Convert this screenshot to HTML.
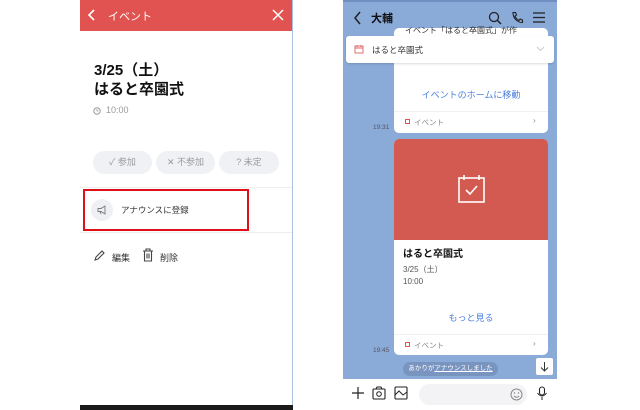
<!DOCTYPE html>
<html><head><meta charset="utf-8"><style>
*{margin:0;padding:0;box-sizing:border-box}
body{width:640px;height:410px;background:#fff;position:relative;overflow:hidden;font-family:"Liberation Sans","Noto Sans CJK JP",sans-serif;color:#111}
.a{position:absolute}
.btn{position:absolute;top:151px;height:23px;border-radius:12px;background:#f0f1f4;color:#999;font-size:9px;text-align:center;line-height:23px}
</style></head><body>
<!-- left phone -->
<div class="a" style="left:80px;top:0;width:213px;height:410px;background:#fff;border-right:1px solid #aac0e0"></div>
<div class="a" style="left:80px;top:0;width:212px;height:31px;background:#e05350"></div>
<svg class="a" style="left:86px;top:8px" width="12" height="14"><path d="M8 2L3 7L8 12" stroke="#fff" stroke-width="1.6" fill="none"/></svg>
<div class="a" style="left:108px;top:8px;font-size:11px;color:#fff">イベント</div>
<svg class="a" style="left:272px;top:9px" width="12" height="12"><path d="M1 1L11 11M11 1L1 11" stroke="#fff" stroke-width="1.5"/></svg>
<div class="a" style="left:94px;top:61px;font-size:15px;font-weight:bold;line-height:19px">3/25（土）<br>はると卒園式</div>
<svg class="a" style="left:93px;top:107px" width="8" height="8"><circle cx="4" cy="4" r="3.2" stroke="#999" fill="none" stroke-width="1"/><path d="M4 2V4H5.5" stroke="#999" fill="none" stroke-width=".8"/></svg>
<div class="a" style="left:106px;top:105px;font-size:9px;color:#999">10:00</div>
<div class="btn" style="left:93px;width:59px">✓ 参加</div>
<div class="btn" style="left:156px;width:59px">✕ 不参加</div>
<div class="btn" style="left:219px;width:60px">? 未定</div>
<div class="a" style="left:80px;top:187px;width:212px;height:1px;background:#eee"></div>
<div class="a" style="left:80px;top:232px;width:212px;height:1px;background:#eee"></div>
<div class="a" style="left:83px;top:189px;width:166px;height:42px;border:2px solid #e0101a"></div>
<div class="a" style="left:91px;top:199px;width:22px;height:22px;border-radius:11px;background:#eef0f3"></div>
<svg class="a" style="left:97px;top:205px" width="10" height="10"><path d="M1 3.5H4L8 1V9L4 6.5H1Z M3 6.5L4 9" stroke="#777" fill="none" stroke-width=".9"/></svg>
<div class="a" style="left:121px;top:204px;font-size:8.5px;color:#333">アナウンスに登録</div>
<svg class="a" style="left:93px;top:249px" width="13" height="13"><path d="M2 11L3 8L9 2L11 4L5 10Z" stroke="#444" fill="none" stroke-width="1.1"/></svg>
<div class="a" style="left:112px;top:251px;font-size:9px;color:#333">編集</div>
<svg class="a" style="left:142px;top:248px" width="12" height="14"><path d="M1 3H11M4 3V1H8V3M2.5 3V13H9.5V3M5 5.5V10.5M7 5.5V10.5" stroke="#444" fill="none" stroke-width="1.1"/></svg>
<div class="a" style="left:160px;top:251px;font-size:9px;color:#333">削除</div>
<div class="a" style="left:80px;top:405px;width:213px;height:5px;background:#1a1a1a"></div>
<!-- right phone -->
<div class="a" style="left:343px;top:0;width:214px;height:410px;background:#8aaad8"></div>
<div class="a" style="left:343px;top:0;width:214px;height:2px;background:#6f8fc0"></div>
<svg class="a" style="left:353px;top:11px" width="10" height="14"><path d="M7 1L2 7L7 13" stroke="#222" stroke-width="1.5" fill="none"/></svg>
<div class="a" style="left:371px;top:10px;font-size:11px;font-weight:bold">大輔</div>
<svg class="a" style="left:488px;top:11px" width="14" height="14"><circle cx="6" cy="6" r="4.5" stroke="#222" fill="none" stroke-width="1.3"/><path d="M9.5 9.5L13 13" stroke="#222" stroke-width="1.5"/></svg>
<svg class="a" style="left:511px;top:11px" width="13" height="13"><path d="M2 1.5L4.5 1.5L5.5 4L4 5.2C5 7.5 6 8.5 8 9.5L9.2 8L11.5 9V11.5C6 11.5 2 7 2 1.5Z" stroke="#222" fill="none" stroke-width="1.1"/></svg>
<svg class="a" style="left:533px;top:12px" width="12" height="11"><path d="M0 1H12M0 5.5H12M0 10H12" stroke="#222" stroke-width="1.3"/></svg>
<!-- card1 -->
<div class="a" style="left:394px;top:28px;width:154px;height:105px;background:#fff;border-radius:5px"></div>
<div class="a" style="left:405px;top:25px;font-size:8px;color:#333">イベント「はると卒園式」が作</div>
<div class="a" style="left:394px;top:88px;width:154px;text-align:center;font-size:9px;color:#4a7fe0">イベントのホームに移動</div>
<div class="a" style="left:394px;top:111px;width:154px;height:1px;background:#f0f0f0"></div>
<div class="a" style="left:405px;top:119px;width:5px;height:5px;border:1px solid #e05350"></div>
<div class="a" style="left:414px;top:117px;font-size:7.5px;color:#888">イベント</div>
<div class="a" style="left:533px;top:116px;font-size:8px;color:#888">›</div>
<div class="a" style="left:373px;top:124px;font-size:6.5px;color:#556">19:31</div>
<!-- pinned -->
<div class="a" style="left:346px;top:36px;width:208px;height:27px;background:#fff;border-radius:3px;box-shadow:0 1px 2px rgba(0,0,0,.15)"></div>
<svg class="a" style="left:354px;top:44px" width="10" height="10"><rect x="1" y="2" width="8" height="7" stroke="#e06060" fill="none" stroke-width=".9"/><path d="M1 4H9M3 1V3M7 1V3" stroke="#e06060" stroke-width=".9"/></svg>
<div class="a" style="left:372px;top:44px;font-size:8.5px;color:#333">はると卒園式</div>
<svg class="a" style="left:536px;top:46px" width="9" height="6"><path d="M1 1L4.5 4.5L8 1" stroke="#ccc" fill="none"/></svg>
<!-- card2 -->
<div class="a" style="left:394px;top:139px;width:154px;height:216px;background:#fff;border-radius:5px;overflow:hidden"><div style="height:101px;background:#d35a50"></div></div>
<svg class="a" style="left:458px;top:174px" width="28" height="29"><rect x="1" y="4" width="25" height="24" stroke="#fff" fill="none" stroke-width="1.6"/><path d="M6 1V6M21 1V6M8 16L12 20L19 12" stroke="#fff" fill="none" stroke-width="1.6"/></svg>
<div class="a" style="left:403px;top:245px;font-size:10px;font-weight:bold">はると卒園式</div>
<div class="a" style="left:403px;top:264px;font-size:8px;color:#555;line-height:12px">3/25（土）<br>10:00</div>
<div class="a" style="left:394px;top:311px;width:154px;text-align:center;font-size:9px;color:#4a7fe0">もっと見る</div>
<div class="a" style="left:394px;top:334px;width:154px;height:1px;background:#f0f0f0"></div>
<div class="a" style="left:405px;top:342px;width:5px;height:5px;border:1px solid #e05350"></div>
<div class="a" style="left:414px;top:340px;font-size:7.5px;color:#888">イベント</div>
<div class="a" style="left:533px;top:339px;font-size:8px;color:#888">›</div>
<div class="a" style="left:373px;top:347px;font-size:6.5px;color:#556">19:45</div>
<div class="a" style="left:403px;top:362px;width:95px;height:14px;border-radius:7px;background:#7a94c0;color:#fff;font-size:6.5px;text-align:center;line-height:14px">あかりが<u>アナウンスしました</u></div>
<div class="a" style="left:536px;top:358px;width:17px;height:17px;background:#fff;border-radius:2px"></div>
<svg class="a" style="left:540px;top:361px" width="9" height="11"><path d="M4.5 1V10M1 6.5L4.5 10L8 6.5" stroke="#333" fill="none" stroke-width="1"/></svg>
<div class="a" style="left:343px;top:379px;width:214px;height:31px;background:#fff"></div>
<svg class="a" style="left:352px;top:387px" width="12" height="12"><path d="M6 0V12M0 6H12" stroke="#222" stroke-width="1.2"/></svg>
<svg class="a" style="left:372px;top:386px" width="14" height="14"><rect x="1" y="3" width="12" height="10" rx="1" stroke="#222" fill="none" stroke-width="1.1"/><path d="M4 3L5 1H9L10 3" stroke="#222" fill="none"/><circle cx="7" cy="8" r="2.3" stroke="#222" fill="none"/></svg>
<svg class="a" style="left:394px;top:386px" width="14" height="14"><rect x="1" y="1" width="12" height="12" rx="1" stroke="#222" fill="none" stroke-width="1.1"/><path d="M1 9L5 5L9 9L13 6" stroke="#222" fill="none"/></svg>
<div class="a" style="left:419px;top:384px;width:108px;height:21px;border-radius:11px;background:#f3f3f5"></div>
<svg class="a" style="left:510px;top:388px" width="13" height="13"><circle cx="6.5" cy="6.5" r="5.5" stroke="#888" fill="none"/><circle cx="4.5" cy="5" r=".7" fill="#888"/><circle cx="8.5" cy="5" r=".7" fill="#888"/><path d="M4 8Q6.5 10.5 9 8" stroke="#888" fill="none"/></svg>
<svg class="a" style="left:536px;top:386px" width="12" height="15"><rect x="3.5" y="1" width="5" height="8" rx="2.5" stroke="#222" fill="none" stroke-width="1.1"/><path d="M1.5 7Q6 13 10.5 7M6 11V14" stroke="#222" fill="none"/></svg>
</body></html>
